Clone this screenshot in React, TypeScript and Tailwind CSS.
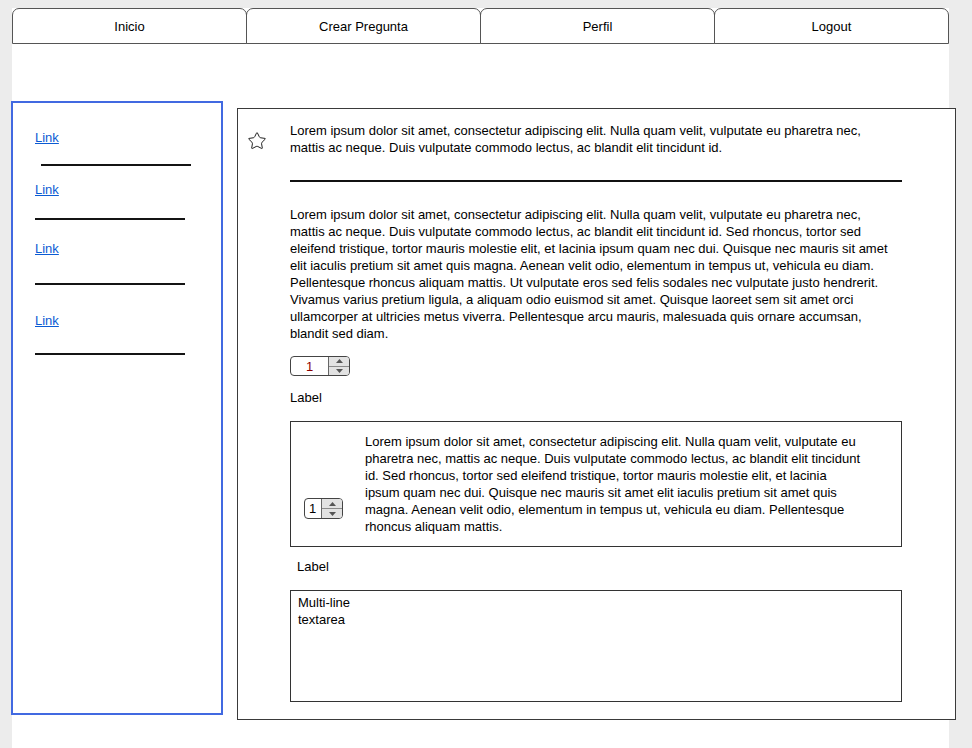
import { Star } from 'lucide-react';

const lorem1 =
  'Lorem ipsum dolor sit amet, consectetur adipiscing elit. Nulla quam velit, vulputate eu pharetra nec, mattis ac neque. Duis vulputate commodo lectus, ac blandit elit tincidunt id.';

const lorem2 =
  'Lorem ipsum dolor sit amet, consectetur adipiscing elit. Nulla quam velit, vulputate eu pharetra nec, mattis ac neque. Duis vulputate commodo lectus, ac blandit elit tincidunt id. Sed rhoncus, tortor sed eleifend tristique, tortor mauris molestie elit, et lacinia ipsum quam nec dui. Quisque nec mauris sit amet elit iaculis pretium sit amet quis magna. Aenean velit odio, elementum in tempus ut, vehicula eu diam. Pellentesque rhoncus aliquam mattis. Ut vulputate eros sed felis sodales nec vulputate justo hendrerit. Vivamus varius pretium ligula, a aliquam odio euismod sit amet. Quisque laoreet sem sit amet orci ullamcorper at ultricies metus viverra. Pellentesque arcu mauris, malesuada quis ornare accumsan, blandit sed diam.';

// wrapped by hand so the lines break where the mockup breaks them
const lorem3 = [
  'Lorem ipsum dolor sit amet, consectetur adipiscing elit. Nulla quam velit, vulputate eu',
  'pharetra nec, mattis ac neque. Duis vulputate commodo lectus, ac blandit elit tincidunt',
  'id. Sed rhoncus, tortor sed eleifend tristique, tortor mauris molestie elit, et lacinia',
  'ipsum quam nec dui. Quisque nec mauris sit amet elit iaculis pretium sit amet quis',
  'magna. Aenean velit odio, elementum in tempus ut, vehicula eu diam. Pellentesque',
  'rhoncus aliquam mattis.',
];

const tabs = ['Inicio', 'Crear Pregunta', 'Perfil', 'Logout'];

// little up/down arrows of the stepper
function Arrows() {
  return (
    <div className="w-[21px] flex flex-col border-l border-[#666] bg-[#e2e2e2]">
      <div className="flex-1 flex items-center justify-center border-b border-[#8a8a8a]">
        <svg width="7" height="4" viewBox="0 0 7 4">
          <polygon points="3.5,0 7,4 0,4" fill="#555" />
        </svg>
      </div>
      <div className="flex-1 flex items-center justify-center">
        <svg width="7" height="4" viewBox="0 0 7 4">
          <polygon points="0,0 7,0 3.5,4" fill="#555" />
        </svg>
      </div>
    </div>
  );
}

function Stepper({ small }: { small?: boolean }) {
  if (small) {
    return (
      <div className="w-[39px] h-[21px] shrink-0 flex border border-[#444] rounded-[4px] overflow-hidden bg-white">
        <div className="flex-1 flex items-center pl-[4px] text-[13px] text-black">1</div>
        <Arrows />
      </div>
    );
  }
  return (
    <div className="w-[60px] h-[20px] flex border border-[#444] rounded-[4px] overflow-hidden bg-white">
      <div className="flex-1 flex items-center justify-center text-[13px] text-[#8b0000]">1</div>
      <Arrows />
    </div>
  );
}

function SideLink({ className }: { className?: string }) {
  return (
    <a href="#" className={`block text-[13px] leading-[15px] text-[#0b5bd3] underline w-fit ${className ?? ''}`}>
      Link
    </a>
  );
}

function Rule({ className }: { className?: string }) {
  return <div className={`w-[150px] h-[2px] bg-[#141414] ${className ?? ''}`} />;
}

export default function App() {
  return (
    <div className="min-h-[748px] bg-[#ececec] pl-[12px] pt-[8px] overflow-hidden text-black font-['Liberation_Sans',Arial,sans-serif]">
      <div className="w-[937px] min-h-[740px] bg-white">
        {/* tabs */}
        <div className="flex h-[36px]">
          {tabs.map((t, i) => (
            <div
              key={t}
              className={`flex-1 flex items-center justify-center pt-px border border-[#555] rounded-t-[7px] text-[13px] ${i > 0 ? '-ml-px' : ''}`}
            >
              {t}
            </div>
          ))}
        </div>

        <div className="flex items-start mt-[57px]">
          {/* sidebar */}
          <div className="-ml-px w-[212px] h-[614px] shrink-0 border-2 border-[#4169e1] pl-[22px] pt-[27px]">
            <SideLink />
            <Rule className="mt-[19px] ml-[6px]" />
            <SideLink className="mt-[16px]" />
            <Rule className="mt-[21px]" />
            <SideLink className="mt-[21px]" />
            <Rule className="mt-[27px]" />
            <SideLink className="mt-[28px]" />
            <Rule className="mt-[25px]" />
          </div>

          {/* main panel */}
          <div className="ml-[14px] mt-[7px] w-[719px] h-[612px] shrink-0 flex border border-[#3a3a3a] bg-white">
            <div className="w-[52px] shrink-0 pl-[9px] pt-[22px]">
              <Star size={20} strokeWidth={1.2} color="#222" />
            </div>

            <div className="pt-[13px] text-[13px] leading-[17px]">
              <p className="w-[608px]">{lorem1}</p>
              <div className="mt-[24px] w-[612px] h-[2px] bg-[#111]" />
              <p className="mt-[24px] w-[608px]">{lorem2}</p>

              <div className="mt-[14px]">
                <Stepper />
              </div>
              <div className="mt-[13px]">Label</div>

              <div className="mt-[15px] w-[612px] h-[126px] flex border border-[#333]">
                <div className="ml-[13px] mt-[76px]">
                  <Stepper small />
                </div>
                <p className="ml-[22px] w-[520px] pt-[11px] whitespace-nowrap">
                  {lorem3.map((line) => (
                    <span key={line} className="block">
                      {line}
                    </span>
                  ))}
                </p>
              </div>

              <div className="mt-[11px] ml-[7px]">Label</div>

              <div className="mt-[15px] w-[612px] h-[112px] border border-[#333] pl-[7px] pt-[3px]">
                Multi-line
                <br />
                textarea
              </div>
            </div>
          </div>
        </div>
      </div>
    </div>
  );
}
